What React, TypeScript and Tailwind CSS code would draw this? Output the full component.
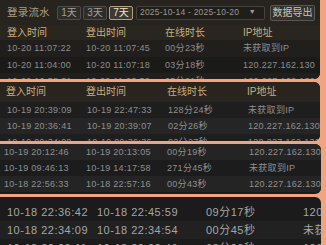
const font = "font-['Liberation_Sans','Noto_Sans_CJK_SC',sans-serif]";

type Row = [string, string, string, string];

const head: Row = ["登入时间", "登出时间", "在线时长", "IP地址"];

const top: Row[] = [
  ["10-20 11:07:22", "10-20 11:07:45", "00分23秒", "未获取到IP"],
  ["10-20 11:04:00", "10-20 11:07:18", "03分18秒", "120.227.162.130"],
  ["10-20 10:58:31", "10-20 11:03:52", "05分21秒", "120.227.162.130"],
];

const second: Row[] = [
  ["10-19 20:39:09", "10-19 22:47:33", "128分24秒", "未获取到IP"],
  ["10-19 20:36:41", "10-19 20:39:07", "02分26秒", "120.227.162.130"],
  ["10-19 09:34:09", "10-19 09:36:36", "02分27秒", "120.227.162.130"],
];

const third: Row[] = [
  ["10-19 20:12:46", "10-19 20:13:05", "00分19秒", "120.227.162.130"],
  ["10-19 09:46:13", "10-19 14:17:58", "271分45秒", "未获取到IP"],
  ["10-18 22:56:33", "10-18 22:57:16", "00分43秒", "120.227.162.130"],
];

const fourth: Row[] = [
  ["10-18 22:36:42", "10-18 22:45:59", "09分17秒", "120.227.162.130"],
  ["10-18 22:34:09", "10-18 22:34:54", "00分45秒", "未获取到IP"],
  ["10-18 22:30:11", "10-18 22:33:40", "03分29秒", "120.227.162.130"],
];

function Cells({ row }: { row: Row }) {
  return (
    <>
      {row.map((c, i) => (
        <span key={i} className="whitespace-nowrap">
          {c}
        </span>
      ))}
    </>
  );
}

function DayBtn({ label, active }: { label: string; active?: boolean }) {
  return (
    <div
      className={
        active
          ? "h-[14px] w-[24px] flex items-center justify-center border border-[#b0a27a] bg-[#3d3a31] text-[#ece6d6] text-[10px] rounded-[2px]"
          : "h-[14px] w-[24px] flex items-center justify-center border border-[#4e4c47] bg-[#2e2d2a] text-[#a3a19b] text-[10px] rounded-[2px]"
      }
    >
      {label}
    </div>
  );
}

export default function App() {
  return (
    <div className={`w-[326px] h-[245px] overflow-hidden bg-[#f4a47c] ${font}`}>
      <div className="flex flex-col gap-[3px] w-[320px]">
        {/* panel 1 */}
        <div className="h-[79px] overflow-hidden rounded-br-md bg-[#1d1c1a]">
          <div className="h-[25px] flex items-center bg-[#27241f] pl-[7px]">
            <span className="text-[10.5px] text-[#ab9c7e] tracking-[0.2px] w-[50px]">登录流水</span>
            <div className="flex gap-[2px]">
              <DayBtn label="1天" />
              <DayBtn label="3天" />
              <DayBtn label="7天" active />
            </div>
            <div className="ml-[3px] h-[14px] w-[129px] flex items-center justify-between border border-[#45433f] bg-[#1f1e1b] pl-[3px] pr-[8px] text-[8.5px] text-[#9a9892] tracking-[0.2px] rounded-[2px]">
              <span>2025-10-14 - 2025-10-20</span>
              <span className="text-[7px] text-[#a09e98]">▼</span>
            </div>
            <div className="ml-[5px] h-[16px] w-[45px] flex items-center justify-center border border-[#5a5751] bg-[#33312d] text-[10px] text-[#c6c2b8] rounded-[2px]">
              数据导出
            </div>
          </div>
          <div className="h-[15px] grid grid-cols-[79px_79px_78px_1fr] items-center pl-[7px] bg-[#29251f] text-[10px] text-[#c9ae7c] leading-none">
            <Cells row={head} />
          </div>
          {top.map((r, i) => (
            <div
              key={i}
              className={
                i % 2 === 0
                  ? "h-[17px] grid grid-cols-[79px_79px_78px_1fr] items-center pl-[7px] bg-[#201f1d] text-[9px] tracking-[0.3px] text-[#8f8d89] leading-none"
                  : "h-[16px] grid grid-cols-[79px_79px_78px_1fr] items-center pl-[7px] bg-[#1a1a19] text-[9px] tracking-[0.3px] text-[#8f8d89] leading-none"
              }
            >
              <Cells row={r} />
            </div>
          ))}
        </div>

        {/* panel 2 */}
        <div className="h-[59px] overflow-hidden rounded-r-md bg-[#1c1c1c]">
          <div className="h-[20px] grid grid-cols-[80px_81px_80px_1fr] items-center pl-[6px] bg-[#29241e] text-[10px] text-[#c9ae7c] leading-none">
            <Cells row={head} />
          </div>
          {second.map((r, i) => (
            <div
              key={i}
              className={
                i % 2 === 0
                  ? "h-[16px] grid grid-cols-[80px_81px_80px_1fr] items-center pl-[7px] bg-[#1e1e1e] text-[9px] tracking-[0.3px] text-[#8f8f8f] leading-none"
                  : "h-[16px] grid grid-cols-[80px_81px_80px_1fr] items-center pl-[7px] bg-[#252525] text-[9px] tracking-[0.3px] text-[#8f8f8f] leading-none"
              }
            >
              <Cells row={r} />
            </div>
          ))}
        </div>

        {/* panel 3 */}
        <div className="h-[50px] w-[321px] overflow-hidden rounded-r-md bg-[#1c1c1c]">
          {third.map((r, i) => (
            <div
              key={i}
              className={
                i % 2 === 0
                  ? "h-[16px] grid grid-cols-[82px_81px_82px_1fr] items-center pl-[4px] bg-[#242424] text-[9px] tracking-[0.3px] text-[#8f8f8f] leading-none"
                  : "h-[16px] grid grid-cols-[82px_81px_82px_1fr] items-center pl-[4px] bg-[#1c1c1c] text-[9px] tracking-[0.3px] text-[#8f8f8f] leading-none"
              }
            >
              <Cells row={r} />
            </div>
          ))}
        </div>

        {/* panel 4 */}
        <div className="h-[60px] w-[321px] overflow-hidden rounded-tr-md bg-[#1b1b1b] pt-[6px]">
          {fourth.map((r, i) => (
            <div
              key={i}
              className={
                i % 2 === 0
                  ? "h-[18px] grid grid-cols-[90px_109px_97px_1fr] items-center pl-[7px] bg-[#1b1b1b] text-[11px] tracking-[0.5px] text-[#a6a6a6] leading-none"
                  : "h-[18px] grid grid-cols-[90px_109px_97px_1fr] items-center pl-[7px] bg-[#212121] text-[11px] tracking-[0.5px] text-[#a6a6a6] leading-none"
              }
            >
              <Cells row={r} />
            </div>
          ))}
        </div>
      </div>
    </div>
  );
}
